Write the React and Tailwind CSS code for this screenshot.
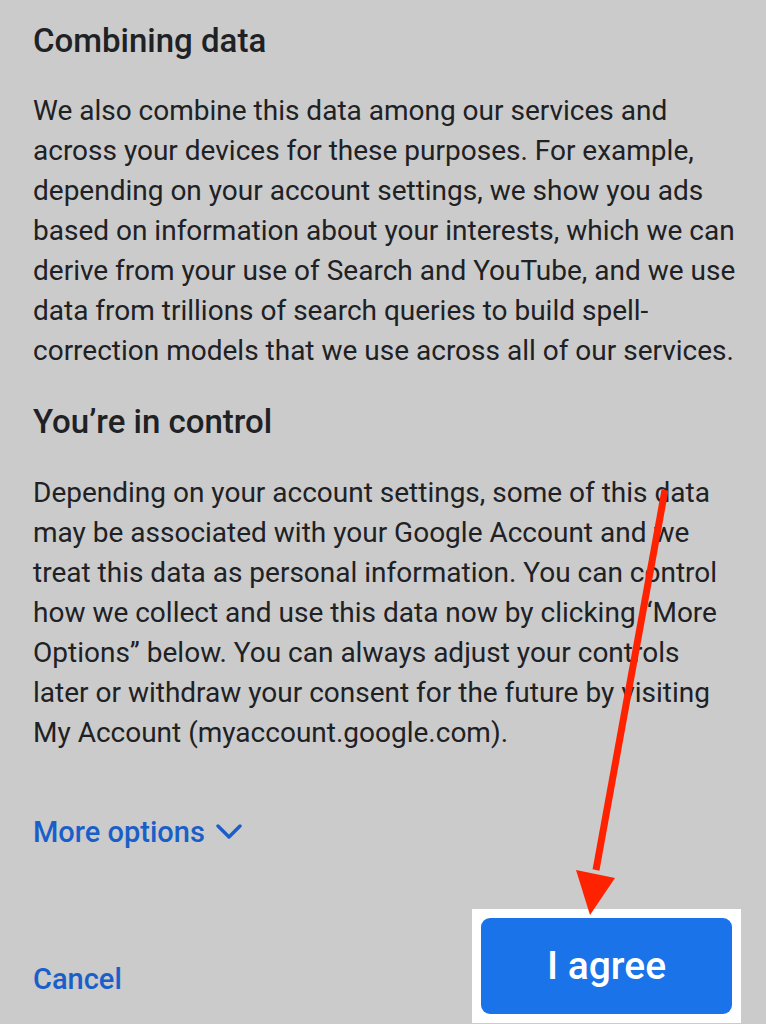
export default function App() {
  return (
    <div className="relative w-[766px] h-[1024px] overflow-hidden bg-[#cbcbcb] font-['Roboto',sans-serif] text-[#202124]">
      <div className="pl-[33px] pt-[21px]">
        <h2 className="text-[33px] leading-[40px] font-medium whitespace-nowrap">Combining data</h2>
        <p className="mt-[30px] text-[28px] leading-[40px] whitespace-nowrap">
          We also combine this data among our services and<br />
          across your devices for these purposes. For example,<br />
          depending on your account settings, we show you ads<br />
          based on information about your interests, which we can<br />
          derive from your use of Search and YouTube, and we use<br />
          data from trillions of search queries to build spell-<br />
          correction models that we use across all of our services.
        </p>
        <h2 className="mt-[31px] text-[33px] leading-[40px] font-medium whitespace-nowrap">You’re in control</h2>
        <p className="mt-[31px] text-[28px] leading-[40px] whitespace-nowrap">
          Depending on your account settings, some of this data<br />
          may be associated with your Google Account and we<br />
          treat this data as personal information. You can control<br />
          how we collect and use this data now by clicking “More<br />
          Options” below. You can always adjust your controls<br />
          later or withdraw your consent for the future by visiting<br />
          My Account (myaccount.google.com).
        </p>
        <div className="mt-[59px] flex items-center gap-[11px] text-[29px] leading-[40px] text-[#1a5fc9] font-medium">
          <span>More options</span>
          <svg width="26" height="18" viewBox="0 0 26 18" fill="none" stroke="currentColor" strokeWidth="3.4" strokeLinecap="round" strokeLinejoin="round">
            <path d="M2 3 L13 14 L24 3" />
          </svg>
        </div>
      </div>
      <div className="mt-[57px] flex items-start justify-between pl-[33px] pr-[25px]">
        <span className="mt-[50px] text-[29px] leading-[40px] text-[#1a5fc9] font-medium">Cancel</span>
        <div className="bg-white p-[9px]">
          <button className="w-[251px] h-[96px] rounded-[9px] bg-[#1a73e8] text-white text-[39px] font-medium">I agree</button>
        </div>
      </div>
      <svg className="absolute inset-0 pointer-events-none" width="766" height="1024">
        <line x1="665" y1="490" x2="596" y2="870" stroke="#ff2200" strokeWidth="7" />
        <polygon points="576,870 615,878 590,915" fill="#ff2200" />
      </svg>
    </div>
  );
}
